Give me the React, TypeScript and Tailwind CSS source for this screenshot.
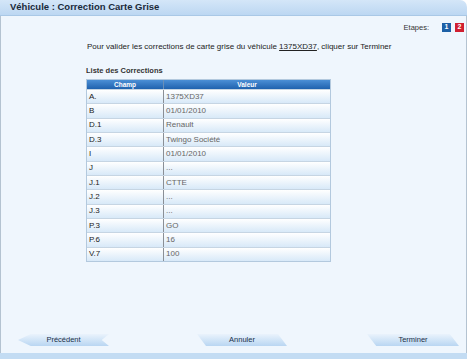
import React from 'react';

const rows: [string, string][] = [
  ['A.', '1375XD37'],
  ['B', '01/01/2010'],
  ['D.1', 'Renault'],
  ['D.3', 'Twingo Société'],
  ['I', '01/01/2010'],
  ['J', '...'],
  ['J.1', 'CTTE'],
  ['J.2', '...'],
  ['J.3', '...'],
  ['P.3', 'GO'],
  ['P.6', '16'],
  ['V.7', '100'],
];

const btn =
  'h-[12px] flex items-center justify-center text-[7.5px] text-[#1a2f4a] bg-gradient-to-b from-[#eaf3fc] to-[#b9d6f2]';

export default function App() {
  return (
    <div className="w-[470px] h-[359px] bg-white font-['Liberation_Sans',Arial,sans-serif]">
      <div className="w-[467px] h-full flex flex-col">
        <div className="h-[16px] shrink-0 rounded-tr-[7px] bg-gradient-to-b from-[#d4e6f8] to-[#bcd7f2] border-b border-[#a9c8e6] flex items-center pl-[10px]">
          <span className="text-[9.5px] font-bold text-[#1a2a3a]">Véhicule : Correction Carte Grise</span>
        </div>

        <div className="flex-1 flex flex-col bg-[#eff6fd] border-r border-l border-[#b4c3d1]">
          <div className="flex justify-end items-center gap-[4px] pt-[4px] pr-[2px] h-[15px] box-content">
            <span className="text-[7.5px] text-[#333] mr-[9px]">Etapes:</span>
            <span className="w-[9px] h-[9px] bg-[#1d60a6] text-white text-[7px] font-bold flex items-center justify-center">1</span>
            <span className="w-[9px] h-[9px] bg-[#d01f30] text-white text-[7px] font-bold flex items-center justify-center">2</span>
          </div>

          <p className="mt-[7px] pl-[86px] text-[8px] text-[#222] leading-[10px]">
            Pour valider les corrections de carte grise du véhicule <span className="underline">1375XD37</span>, cliquer sur Terminer
          </p>

          <p className="mt-[14px] pl-[85px] text-[7.5px] font-bold text-[#333] leading-[10px]">Liste des Corrections</p>

          <div className="ml-[85px] mt-[3px] w-[245px] border border-[#b3c9de]">
            <div className="flex h-[9px] bg-gradient-to-b from-[#4b8fd6] to-[#1f62ae] text-white text-[6.5px] font-bold leading-[9px]">
              <div className="w-[77px] text-center border-r border-[#6a8fb8]">Champ</div>
              <div className="flex-1 text-center">Valeur</div>
            </div>
            {rows.map(([k, v]) => (
              <div
                key={k}
                className="flex h-[14.33px] bg-gradient-to-b from-[#ffffff] to-[#d8e9f8] border-t border-[#c6d5e3] text-[8px]"
              >
                <div className="w-[77px] flex items-center pl-[2px] text-[#222] border-r border-[#8a8f96]">{k}</div>
                <div className="flex-1 flex items-center pl-[2px] text-[#666]">{v}</div>
              </div>
            ))}
          </div>

          <div className="mt-auto mb-[7px] flex items-center">
            <div className={`${btn} ml-[17px] w-[91px] [clip-path:polygon(0_50%,14%_0,100%_0,92%_50%,100%_100%,14%_100%)]`}>
              Précédent
            </div>
            <div className={`${btn} ml-[88px] w-[90px] [clip-path:polygon(0_0,90%_0,100%_100%,10%_100%)]`}>
              Annuler
            </div>
            <div className={`${btn} ml-[80px] w-[92px] [clip-path:polygon(0_0,90%_0,100%_100%,10%_100%)]`}>
              Terminer
            </div>
          </div>
        </div>

        <div className="h-[6px] shrink-0 bg-[#c3dcf3]" />
      </div>
    </div>
  );
}
